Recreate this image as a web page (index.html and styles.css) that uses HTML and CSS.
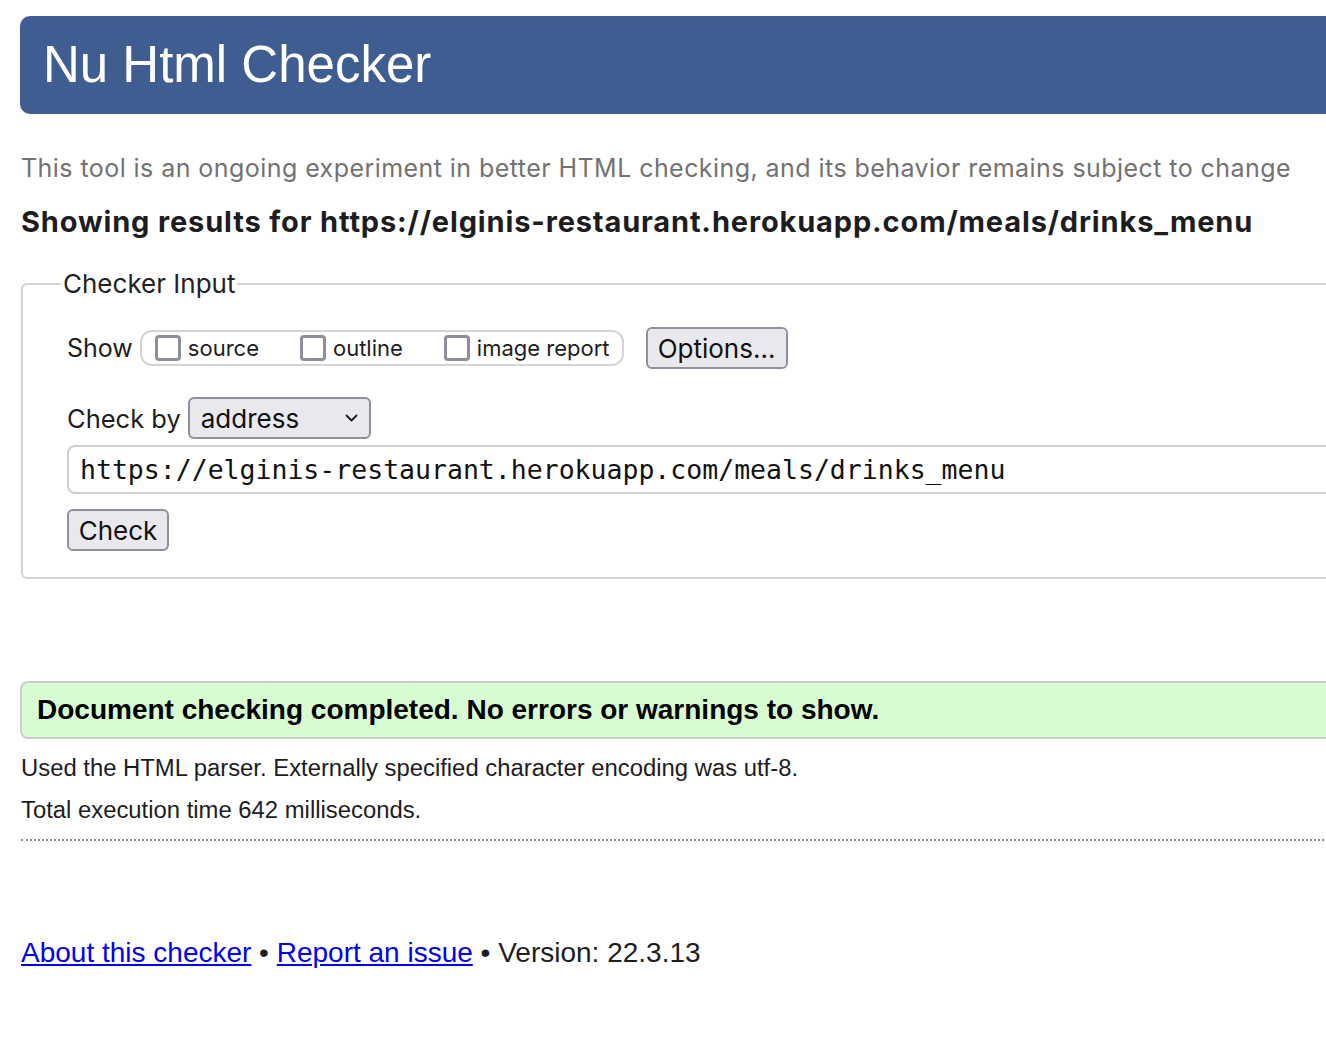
FILE: index.html
```html
<!DOCTYPE html>
<html lang="en">
<head>
<meta charset="utf-8">
<title>Nu Html Checker</title>
<link rel="stylesheet" href="styles.css">
</head>
<body>
<div class="page">
  <h1 class="banner">Nu Html Checker</h1>
  <p class="tagline">This tool is an ongoing experiment in better HTML checking, and its behavior remains subject to change</p>
  <h2 class="results">Showing results for https://elginis-restaurant.herokuapp.com/meals/drinks_menu</h2>
  <form class="checker">
    <fieldset class="input-set">
      <legend class="legend">Checker Input</legend>
      <div class="row show-row">
        <span class="lbl">Show</span>
        <span class="opts">
          <span class="opt"><span class="cb"></span>source</span>
          <span class="opt"><span class="cb"></span>outline</span>
          <span class="opt"><span class="cb"></span>image report</span>
        </span>
        <button type="button" class="btn btn-options">Options...</button>
      </div>
      <div class="row by-row">
        <span class="lbl">Check by</span>
        <span class="select">address
          <svg class="chev" width="13" height="8" viewBox="0 0 13 8"><path d="M1.5 1.5 L6.5 6.5 L11.5 1.5" fill="none" stroke="#1c1c1e" stroke-width="1.8" stroke-linecap="round" stroke-linejoin="round"/></svg>
        </span>
      </div>
      <div class="url">https://elginis-restaurant.herokuapp.com/meals/drinks_menu</div>
      <button type="button" class="btn btn-check">Check</button>
    </fieldset>
  </form>
  <div class="success">Document checking completed. No errors or warnings to show.</div>
  <p class="detail">Used the HTML parser. Externally specified character encoding was utf-8.</p>
  <p class="detail">Total execution time 642 milliseconds.</p>
  <hr class="dotted">
  <p class="footer"><a href="#" class="link">About this checker</a> • <a href="#" class="link">Report an issue</a> • Version: 22.3.13</p>
</div>
</body>
</html>
```

FILE: styles.css
```css
html, body {
  margin: 0;
  padding: 0;
  overflow: hidden;
  background: #fff;
}
body {
  font-family: "Liberation Sans", Arial, sans-serif;
  color: #1d1d1f;
}
.page {
  width: 1500px;
  padding: 16px 0 60px 20px;
}
.banner {
  margin: 0;
  height: 98px;
  line-height: 98px;
  padding-left: 23px;
  background: #3f5d91;
  color: #fff;
  font-size: 51px;
  font-weight: normal;
  border-radius: 10px;
}
.tagline {
  margin: 39px 0 0 1px;
  font-family: Inter, "Open Sans", sans-serif;
  font-size: 25px;
  letter-spacing: 0.44px;
  line-height: 30px;
  color: #727272;
}
.results {
  margin: 22px 0 0 1px;
  font-family: Inter, "Open Sans", sans-serif;
  font-size: 29px;
  letter-spacing: 0.85px;
  line-height: 34px;
  font-weight: bold;
  color: #1d1d1f;
}
.checker {
  margin: 30px 0 0 1px;
}
.input-set {
  margin: 0;
  border: 2px solid #d2d2d2;
  border-radius: 6px;
  padding: 28px 0 26px 44px;
  font-family: Inter, "Open Sans", sans-serif;
}
.legend {
  margin-left: -6px;
  padding: 0 2px;
  font-size: 26px;
  line-height: 30px;
  color: #222;
}
.row {
  display: flex;
  align-items: center;
  height: 42px;
}
.lbl {
  font-size: 25.5px;
  color: #1d1d1f;
}
.show-row .lbl {
  font-size: 25px;
}
.opts {
  display: flex;
  align-items: center;
  gap: 41px;
  height: 32px;
  margin-left: 7px;
  padding: 0 12px 0 13px;
  border: 2px solid #d4d4d4;
  border-radius: 12px;
}
.opt {
  display: flex;
  align-items: center;
  gap: 7px;
  font-size: 22px;
  color: #1d1d1f;
}
.cb {
  width: 20px;
  height: 20px;
  border: 3px solid #8e8e98;
  border-radius: 4px;
  background: #fff;
}
.btn, .select {
  box-sizing: border-box;
  height: 42px;
  background: #e9e9ed;
  border: 2px solid #8f8f9d;
  border-radius: 6px;
  font-family: Inter, "Open Sans", sans-serif;
  font-size: 26px;
  color: #111;
}
.btn-options {
  margin-left: 22px;
  width: 142px;
  padding: 0;
}
.by-row {
  margin-top: 28px;
}
.select {
  display: flex;
  align-items: center;
  justify-content: space-between;
  width: 183px;
  margin-left: 7px;
  padding: 0 11px 0 11px;
}
.url {
  box-sizing: border-box;
  margin-top: 6px;
  height: 49px;
  border: 2px solid #cfcfcf;
  border-radius: 8px;
  padding-left: 11px;
  display: flex;
  align-items: center;
  font-family: "DejaVu Sans Mono", monospace;
  font-size: 26.5px;
  color: #111;
}
.btn-check {
  display: block;
  margin-top: 15px;
  width: 102px;
  padding: 0;
}
.success {
  box-sizing: border-box;
  margin-top: 102px;
  height: 58px;
  border: 2px solid #cdcdcd;
  border-radius: 8px;
  background: #d9fbd2;
  padding-left: 15px;
  display: flex;
  align-items: center;
  font-size: 28px;
  font-weight: bold;
  color: #000;
}
.detail {
  margin: 0 0 0 1px;
  font-size: 23.85px;
  line-height: 42px;
}
.success + .detail {
  margin-top: 8px;
}
.dotted {
  margin: 8px 0 0 1px;
  border: 0;
  border-top: 2px dotted #8a8a8a;
  height: 0;
}
.footer {
  margin: 92px 0 0 1px;
  font-size: 28px;
  line-height: 40px;
}
.link {
  color: #0000ee;
  text-decoration: underline;
}
```
